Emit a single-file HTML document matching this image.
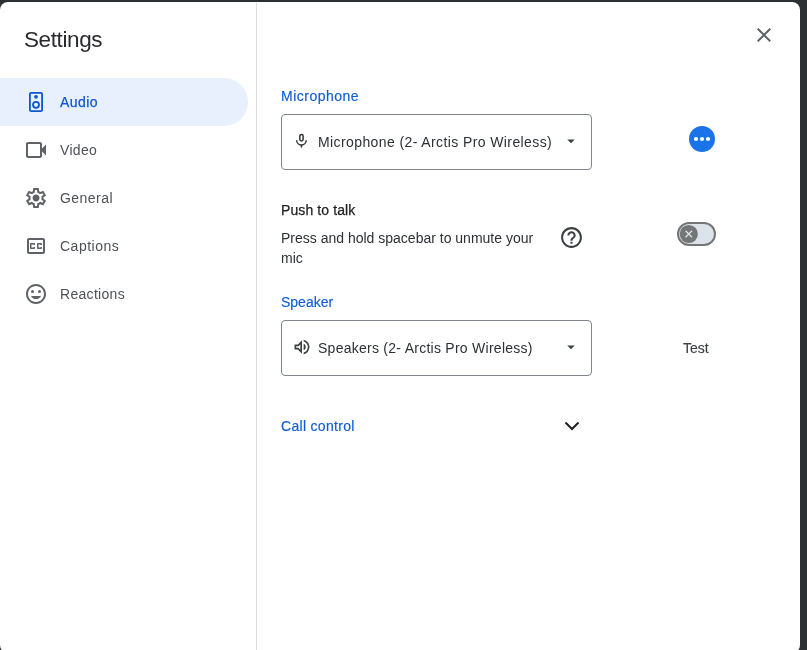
<!DOCTYPE html>
<html><head><meta charset="utf-8">
<style>
html,body{margin:0;padding:0;width:807px;height:650px;overflow:hidden;background:#2d3033;}
*{box-sizing:border-box;}
body{font-family:"Liberation Sans",sans-serif;position:relative;}
#dlg{position:absolute;left:0;top:2px;width:800px;height:651px;background:#fff;border-radius:8px;overflow:hidden;}
.a{will-change:transform;position:absolute;white-space:nowrap;line-height:20px;font-size:14px;}
.sep{position:absolute;left:256px;top:1px;width:1px;height:660px;background:#dadce0;}
.pill{position:absolute;left:0;top:76px;width:248px;height:48px;background:#e8f0fe;border-radius:0 24px 24px 0;}
.nav{color:#4d5156;letter-spacing:0.3px;}
.ic{position:absolute;}
.sel{position:absolute;left:281px;width:311px;height:56px;border:1px solid #80868b;border-radius:4px;}
.blue{color:#0d5cd5;-webkit-text-stroke:0.15px #0d5cd5;}
.med{-webkit-text-stroke:0.25px currentColor;}
</style></head><body>
<div id="dlg">
  <div class="sep"></div>
  <div class="a" style="left:24px;top:23.5px;font-size:22.5px;line-height:28px;letter-spacing:-0.4px;color:#2a2b2e;">Settings</div>
  <div class="pill"></div>

  <!-- nav icons -->
  <svg class="ic" style="left:24px;top:88px" width="24" height="24" viewBox="0 0 24 24">
    <rect x="5.9" y="2.9" width="12.2" height="18.2" rx="1.2" fill="none" stroke="#0b57d0" stroke-width="1.8"/>
    <circle cx="12" cy="6.8" r="1.9" fill="#0b57d0"/>
    <circle cx="12" cy="14.8" r="3" fill="none" stroke="#0b57d0" stroke-width="1.8"/>
  </svg>
  <div class="a nav med" style="left:60px;top:90px;color:#0b57d0;letter-spacing:0.45px;">Audio</div>

  <svg class="ic" style="left:24px;top:136px" width="24" height="24" viewBox="0 0 24 24">
    <path fill="#5f6368" d="M18 10.48V6c0-1.1-.9-2-2-2H4c-1.1 0-2 .9-2 2v12c0 1.1.9 2 2 2h12c1.1 0 2-.9 2-2v-4.48l4 3.98v-11l-4 3.98zm-2-.79V18H4V6h12v3.69z"/>
  </svg>
  <div class="a nav" style="left:60px;top:138px;">Video</div>

  <svg class="ic" style="left:24px;top:184px" width="24" height="24" viewBox="0 -960 960 960">
    <path fill="#5f6368" fill-rule="evenodd" d="m370-80-16-128q-13-5-24.5-12T307-235l-119 50L78-375l103-78q-1-7-1-13.5v-27q0-6.5 1-13.5L78-585l110-190 119 50q11-8 23-15t24-12l16-128h220l16 128q13 5 24.5 12t22.5 15l119-50 110 190-103 78q1 7 1 13.5v27q0 6.5-2 13.5l103 78-110 190-118-50q-11 8-23 15t-24 12L590-80H370Zm70-80h79l14-106q31-8 57.5-23.5T639-327l99 41 39-68-86-65q5-14 7-29.5t2-31.5q0-16-2-31.5t-7-29.5l86-65-39-68-99 42q-22-23-48.5-38.5T533-694l-13-106h-79l-14 106q-31 8-57.5 23.5T321-633l-99-41-39 68 86 64q-5 15-7 30t-2 32q0 16 2 31t7 30l-86 65 39 68 99-42q22 23 48.5 38.5T427-266l13 106Zm42-180q58 0 99-41t41-99q0-58-41-99t-99-41q-59 0-99.5 41T342-480q0 58 40.5 99t99.5 41Z"/>
  </svg>
  <div class="a nav" style="left:60px;top:186px;letter-spacing:0.45px;">General</div>

  <svg class="ic" style="left:24px;top:232px" width="24" height="24" viewBox="0 0 24 24">
    <path fill="#5f6368" d="M19 4H5c-1.11 0-2 .9-2 2v12c0 1.1.89 2 2 2h14c1.1 0 2-.9 2-2V6c0-1.1-.9-2-2-2zm0 14H5V6h14v12zM7 15h3c.55 0 1-.45 1-1v-1H9.5v.5h-2v-3h2v.5H11v-1c0-.55-.45-1-1-1H7c-.55 0-1 .45-1 1v4c0 .55.45 1 1 1zm7 0h3c.55 0 1-.45 1-1v-1h-1.5v.5h-2v-3h2v.5H18v-1c0-.55-.45-1-1-1h-3c-.55 0-1 .45-1 1v4c0 .55.45 1 1 1z"/>
  </svg>
  <div class="a nav" style="left:60px;top:234px;letter-spacing:0.5px;">Captions</div>

  <svg class="ic" style="left:24px;top:280px" width="24" height="24" viewBox="0 0 24 24">
    <circle cx="15.5" cy="9.5" r="1.5" fill="#5f6368"/><circle cx="8.5" cy="9.5" r="1.5" fill="#5f6368"/>
    <path fill="#5f6368" d="M11.99 2C6.47 2 2 6.48 2 12s4.47 10 9.99 10C17.52 22 22 17.52 22 12S17.52 2 11.99 2zM12 20c-4.42 0-8-3.58-8-8s3.58-8 8-8 8 3.58 8 8-3.58 8-8 8zm-5-6c.78 2.0 2.72 3.1 5 3.1s4.22-1.1 5-3.1H7z"/>
  </svg>
  <div class="a nav" style="left:60px;top:282px;">Reactions</div>

  <!-- close -->
  <svg class="ic" style="left:752px;top:21px" width="24" height="24" viewBox="0 0 24 24">
    <path fill="#5f6368" d="M19 6.41L17.59 5 12 10.59 6.41 5 5 6.41 10.59 12 5 17.59 6.41 19 12 13.41 17.59 19 19 17.59 13.41 12z"/>
  </svg>

  <!-- Microphone -->
  <div class="a blue" style="left:281px;top:84px;letter-spacing:0.5px;">Microphone</div>
  <div class="sel" style="top:112px;"></div>
  <svg class="ic" style="left:290px;top:126px" width="22" height="24" viewBox="0 0 22 24">
    <rect x="9.8" y="6.45" width="3.3" height="6.5" rx="1.65" fill="none" stroke="#2d3034" stroke-width="1.5"/>
    <path d="M6.65 12.2a4.8 4.8 0 0 0 9.6 0" fill="none" stroke="#2d3034" stroke-width="1.5"/>
    <path d="M11.45 16.9V19.6" stroke="#2d3034" stroke-width="1.6"/>
  </svg>
  <div class="a" style="left:318px;top:130px;color:#2d3034;letter-spacing:0.4px;">Microphone (2- Arctis Pro Wireless)</div>
  <svg class="ic" style="left:562px;top:130px" width="18" height="18" viewBox="0 0 24 24"><path fill="#3c4043" d="M7 10l5 5 5-5z"/></svg>

  <svg class="ic" style="left:689px;top:124px" width="26" height="26" viewBox="0 0 26 26">
    <circle cx="13" cy="13" r="13" fill="#1a73e8"/>
    <circle cx="7" cy="13" r="2.1" fill="#fff"/><circle cx="13" cy="13" r="2.1" fill="#fff"/><circle cx="19" cy="13" r="2.1" fill="#fff"/>
  </svg>

  <!-- Push to talk -->
  <div class="a med" style="left:281px;top:198px;color:#1f1f1f;letter-spacing:0.1px;">Push to talk</div>
  <div class="a" style="left:281px;top:226px;color:#2d3034;">Press and hold spacebar to unmute your</div>
  <div class="a" style="left:281px;top:246px;color:#2d3034;">mic</div>
  <svg class="ic" style="left:559.4px;top:223.2px" width="25" height="25" viewBox="0 0 24 24">
    <path fill="#3c4043" d="M11 18h2v-2h-2v2zm1-16C6.48 2 2 6.48 2 12s4.48 10 10 10 10-4.48 10-10S17.52 2 12 2zm0 18c-4.41 0-8-3.59-8-8s3.59-8 8-8 8 3.59 8 8-3.59 8-8 8zm0-14c-2.21 0-4 1.79-4 4h2c0-1.1.9-2 2-2s2 .9 2 2c0 2-3 1.75-3 5h2c0-2.25 3-2.5 3-5 0-2.21-1.79-4-4-4z"/>
  </svg>
  <svg class="ic" style="left:677px;top:220px" width="39" height="24" viewBox="0 0 39 24">
    <rect x="1" y="1" width="37" height="22" rx="11" fill="#dde3ea" stroke="#747775" stroke-width="2"/>
    <circle cx="11.8" cy="12" r="9.1" fill="#747775"/>
    <path d="M8.6 8.8l6.4 6.4M15 8.8l-6.4 6.4" stroke="#dde3ea" stroke-width="1.3"/>
  </svg>

  <!-- Speaker -->
  <div class="a blue" style="left:281px;top:290px;">Speaker</div>
  <div class="sel" style="top:318px;"></div>
  <svg class="ic" style="left:292px;top:335px" width="20" height="20" viewBox="0 -960 960 960">
    <path fill="#3c4043" d="M560-131v-82q90-26 145-100t55-168q0-94-55-168T560-749v-82q124 28 202 125.5T840-481q0 127-78 224.5T560-131ZM120-360v-240h160l200-200v640L280-360H120Zm440 40v-322q47 22 73.5 66t26.5 96q0 51-26.5 94.5T560-320ZM400-606l-86 86H200v80h114l86 86v-252Z"/>
  </svg>
  <div class="a" style="left:318px;top:336px;color:#2d3034;letter-spacing:0.26px;">Speakers (2- Arctis Pro Wireless)</div>
  <svg class="ic" style="left:562px;top:336px" width="18" height="18" viewBox="0 0 24 24"><path fill="#3c4043" d="M7 10l5 5 5-5z"/></svg>
  <div class="a med" style="left:683px;top:336px;color:#3c4043;-webkit-text-stroke:0.15px #3c4043;">Test</div>

  <!-- Call control -->
  <div class="a blue" style="left:281px;top:414px;letter-spacing:0.3px;">Call control</div>
  <svg class="ic" style="left:560px;top:412px" width="24" height="24" viewBox="0 0 24 24">
    <path d="M5.5 8.5l6.5 6.5 6.5-6.5" fill="none" stroke="#202124" stroke-width="2"/>
  </svg>
</div>
</body></html>
